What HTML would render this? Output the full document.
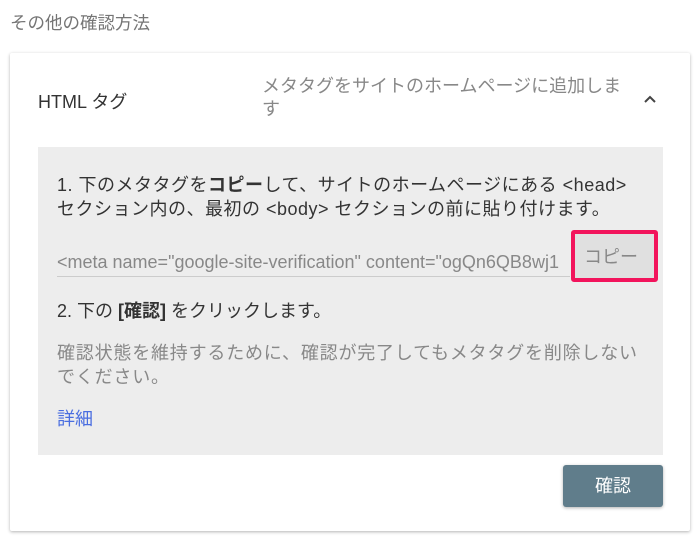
<!DOCTYPE html>
<html><head><meta charset="utf-8"><style>
body{margin:0;width:700px;height:538px;background:#fff;font-family:"Liberation Sans","Noto Sans CJK JP",sans-serif;position:relative;overflow:hidden}
.a{position:absolute;white-space:nowrap}
</style></head><body>
<div class="a" style="left:10px;top:10px;font-size:17.5px;color:#757575">その他の確認方法</div>
<div class="a" style="left:10px;top:53px;width:680px;height:478px;background:#fff;border-radius:2px;box-shadow:0 1px 3px rgba(0,0,0,.3)"></div>
<div class="a" style="left:38px;top:88px;font-size:18px;color:#333">HTML タグ</div>
<div class="a" style="left:262px;top:75px;font-size:18px;color:#888;line-height:23px;white-space:normal;width:362px">メタタグをサイトのホームページに追加します</div>
<svg class="a" style="left:642px;top:93px" width="16" height="12" viewBox="0 0 16 12"><path d="M3 9 L8 4 L13 9" fill="none" stroke="#444" stroke-width="2"/></svg>
<div class="a" style="left:38px;top:147px;width:625px;height:308px;background:#ededed"></div>
<div class="a" style="left:57px;top:173px;font-size:18px;color:#333;line-height:24px;letter-spacing:0.5px">1. 下のメタタグを<b>コピー</b>して、サイトのホームページにある &lt;head&gt;<br>セクション内の、最初の &lt;body&gt; セクションの前に貼り付けます。</div>
<div class="a" style="left:57px;top:252px;width:513px;overflow:hidden;font-size:18px;color:#888;border-bottom:1px solid #ccc;padding-bottom:3px">&lt;meta name="google-site-verification" content="ogQn6QB8wj1</div>
<div class="a" style="left:571px;top:230px;width:79px;height:44px;border:4px solid #f2145c;border-radius:3px;background:#e0e0e0;box-sizing:content-box"></div>
<div class="a" style="left:584px;top:243px;font-size:18px;color:#888">コピー</div>
<div class="a" style="left:57px;top:297px;font-size:18px;color:#333">2. 下の <b>[確認]</b> をクリックします。</div>
<div class="a" style="left:57px;top:341px;font-size:18px;color:#888;line-height:24px;letter-spacing:0.8px">確認状態を維持するために、確認が完了してもメタタグを削除しない<br>でください。</div>
<div class="a" style="left:57px;top:405px;font-size:18px;color:#4a6ee0">詳細</div>
<div class="a" style="left:563px;top:465px;width:100px;height:42px;background:#607d8b;border-radius:3px;box-shadow:0 1px 3px rgba(0,0,0,.3);color:#fff;font-size:18px;text-align:center;line-height:42px">確認</div>
</body></html>
